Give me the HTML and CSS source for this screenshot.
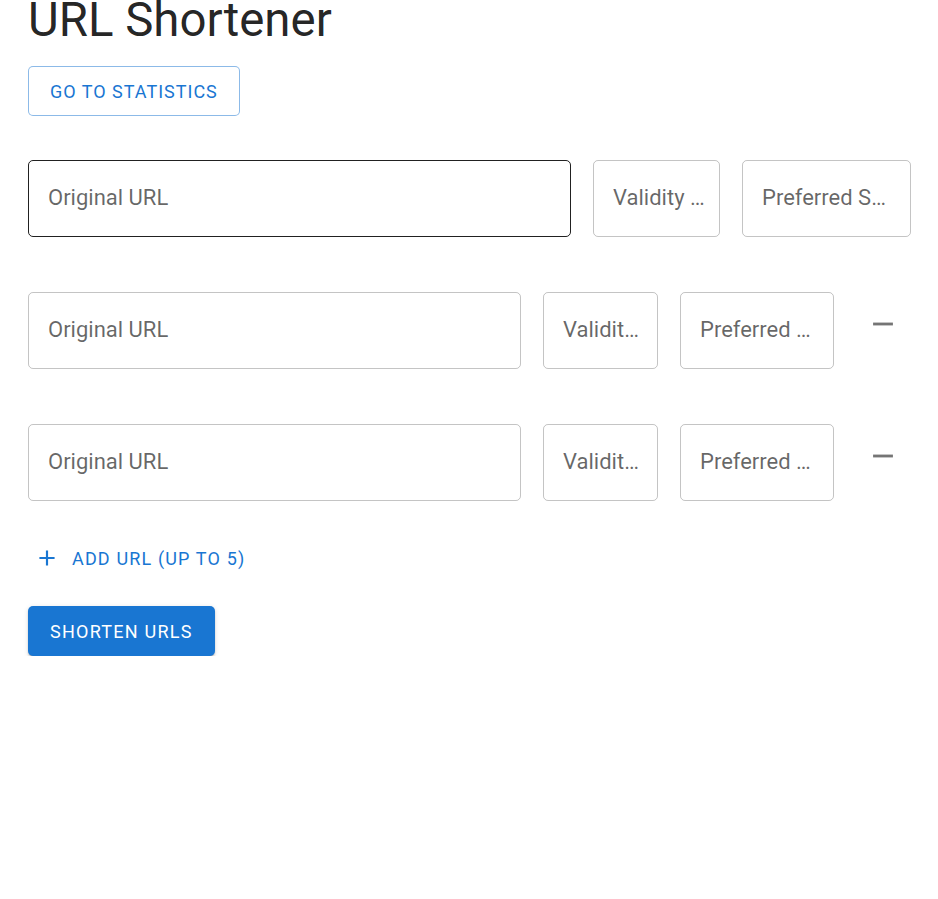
FILE: index.html
```html
<!DOCTYPE html>
<html>
<head>
<meta charset="utf-8">
<link rel="stylesheet" href="styles.css">
</head>
<body>
<div class="page">
  <h1 class="title">URL Shortener</h1>
  <button class="btn-outlined">GO TO STATISTICS</button>

  <div class="rows">
    <div class="row row-first">
      <div class="field field-url field-active"><span class="ph">Original URL</span></div>
      <div class="field field-valid-wide"><span class="ph">Validity (minutes)</span></div>
      <div class="field field-pref-wide"><span class="ph">Preferred Shortcode</span></div>
    </div>
    <div class="row">
      <div class="field field-url-narrow"><span class="ph">Original URL</span></div>
      <div class="field field-valid"><span class="ph">Validity (minutes)</span></div>
      <div class="field field-pref"><span class="ph">Preferred Shortcode</span></div>
      <button class="icon-btn" aria-label="remove"><svg viewBox="0 0 24 24"><path d="M19 13H5v-2h14v2z" fill="#757575"/></svg></button>
    </div>
    <div class="row">
      <div class="field field-url-narrow"><span class="ph">Original URL</span></div>
      <div class="field field-valid"><span class="ph">Validity (minutes)</span></div>
      <div class="field field-pref"><span class="ph">Preferred Shortcode</span></div>
      <button class="icon-btn" aria-label="remove"><svg viewBox="0 0 24 24"><path d="M19 13H5v-2h14v2z" fill="#757575"/></svg></button>
    </div>
  </div>

  <button class="btn-text"><svg class="plus" viewBox="0 0 24 24"><path d="M19 13h-6v6h-2v-6H5v-2h6V5h2v6h6v2z" fill="#1976d2"/></svg>ADD URL (UP TO 5)</button>

  <div class="submit-wrap">
    <button class="btn-contained">SHORTEN URLS</button>
  </div>
</div>
</body>
</html>
```

FILE: styles.css
```css
* { box-sizing: border-box; }
html, body { margin: 0; padding: 0; background: #fff; }
body { font-family: Roboto, "Liberation Sans", sans-serif; color: rgba(0,0,0,0.87); }
.page { padding: 0 27px 0 28px; }
.title {
  font-size: 47.4px;
  font-weight: 400;
  line-height: 56px;
  margin: -8px 0 0 0;
  letter-spacing: 0;
}
.btn-outlined {
  margin-top: 18px;
  display: inline-flex;
  align-items: center;
  height: 50px;
  padding: 0 21px;
  font-family: Roboto, "Liberation Sans", sans-serif;
  font-size: 18px;
  font-weight: 400;
  letter-spacing: 1px;
  color: #1976d2;
  background: #fff;
  border: 1px solid rgba(25,118,210,0.5);
  border-radius: 5px;
}
.rows { margin-top: 44px; display: flex; flex-direction: column; gap: 55px; }
.row { display: flex; align-items: center; gap: 22px; height: 77px; }
.field {
  height: 77px;
  border: 1px solid rgba(0,0,0,0.23);
  border-radius: 5px;
  display: flex;
  align-items: center;
  padding: 0 13px 0 19px;
  overflow: hidden;
  flex: none;
}
.field-active { border-color: rgba(0,0,0,0.87); }
.ph {
  font-size: 22px;
  color: rgba(0,0,0,0.6);
  white-space: nowrap;
  overflow: hidden;
  text-overflow: ellipsis;
  display: block;
  width: 100%;
  margin-top: -2px;
}
.field-url { width: 543px; }
.field-valid-wide { width: 127px; }
.field-pref-wide { width: 169px; }
.field-url-narrow { width: 493px; }
.field-valid { width: 115px; }
.field-pref { width: 154px; }
.icon-btn {
  border: 0;
  background: transparent;
  padding: 0;
  width: 50px;
  height: 50px;
  margin-left: 2px;
  margin-top: -13px;
  display: flex;
  align-items: center;
  justify-content: center;
}
.icon-btn svg { width: 34px; height: 34px; }
.btn-text {
  margin-top: 36px;
  display: inline-flex;
  align-items: center;
  gap: 12px;
  border: 0;
  background: transparent;
  padding: 8px 8px 8px 6px;
  font-family: Roboto, "Liberation Sans", sans-serif;
  font-size: 18px;
  font-weight: 400;
  letter-spacing: 1.15px;
  color: #1976d2;
}
.plus { width: 26px; height: 26px; }
.submit-wrap { margin-top: 27px; }
.btn-contained {
  height: 50px;
  padding: 0 22px;
  border: 0;
  border-radius: 5px;
  background: #1976d2;
  color: #fff;
  font-family: Roboto, "Liberation Sans", sans-serif;
  font-size: 18px;
  font-weight: 400;
  letter-spacing: 1.25px;
  box-shadow: 0px 3px 1px -2px rgba(0,0,0,0.2), 0px 2px 2px 0px rgba(0,0,0,0.14), 0px 1px 5px 0px rgba(0,0,0,0.12);
}
```
